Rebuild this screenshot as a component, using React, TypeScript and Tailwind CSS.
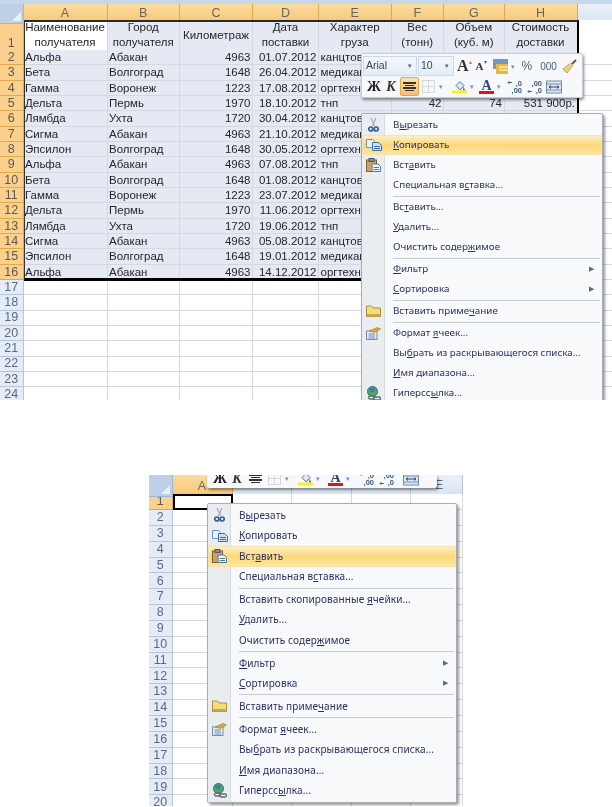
import type { ReactNode } from "react"

const topCols = "grid grid-cols-[23.5px_84px_72.5px_73px_66px_72.5px_52.5px_60.5px_73px_35px]"
const bottomCols = "grid grid-cols-[23.5px_60px_59.5px_60px_59px_52px]"

const names = ["Альфа", "Бета", "Гамма", "Дельта", "Лямбда", "Сигма", "Эпсилон", "Альфа", "Бета", "Гамма", "Дельта", "Лямбда", "Сигма", "Эпсилон", "Альфа"]
const cities = ["Абакан", "Волгоград", "Воронеж", "Пермь", "Ухта", "Абакан", "Волгоград", "Абакан", "Волгоград", "Воронеж", "Пермь", "Ухта", "Абакан", "Волгоград", "Абакан"]
const kms = ["4963", "1648", "1223", "1970", "1720", "4963", "1648", "4963", "1648", "1223", "1970", "1720", "4963", "1648", "4963"]
const dates = ["01.07.2012", "26.04.2012", "17.08.2012", "18.10.2012", "30.04.2012", "21.10.2012", "30.05.2012", "07.08.2012", "01.08.2012", "23.07.2012", "11.06.2012", "19.06.2012", "05.08.2012", "19.01.2012", "14.12.2012"]
const kinds = ["канцтовары", "медикаменты", "оргтехника", "тнп", "канцтовары", "медикаменты", "оргтехника", "тнп", "канцтовары", "медикаменты", "оргтехника", "тнп", "канцтовары", "медикаменты", "оргтехника"]

const headers = [
  ["Наименование", "получателя"],
  ["Город", "получателя"],
  ["Километраж"],
  ["Дата", "поставки"],
  ["Характер", "груза"],
  ["Вес", "(тонн)"],
  ["Объем", "(куб. м)"],
  ["Стоимость", "доставки"],
]

function ColHead({ label, on, extra }: { label: string; on?: boolean; extra?: string }) {
  return (
    <div
      className={`flex items-center justify-center border-r border-b text-[12.5px] ${
        on
          ? "border-[#e0a94f] bg-gradient-to-b from-[#fbdc9f] to-[#f6c676] text-[#6b6656]"
          : "border-[#b6c6d8] bg-gradient-to-b from-[#eaf0f7] to-[#d9e4f1] text-[#5b6b7d]"
      } ${extra ?? ""}`}
    >
      {label}
    </div>
  )
}

function RowHead({ n, on, tall }: { n: number; on?: boolean; tall?: boolean }) {
  return (
    <div
      className={`flex justify-center border-r border-b text-[12.5px] leading-none ${tall ? "items-end pb-[1px]" : "items-center"} ${
        on ? "border-[#e0a94f] bg-[#fbd08d] text-[#5d5a50]" : "border-[#b6c6d8] bg-[#e4ecf7] text-[#5b6b7d]"
      }`}
    >
      {n}
    </div>
  )
}

function Cell({ children, on, right }: { children?: ReactNode; on?: boolean; right?: boolean }) {
  return (
    <div
      className={`overflow-hidden whitespace-nowrap border-r border-b border-[#d5d8dc] px-[1.5px] text-[11.5px] leading-[15px] text-[#262626] ${
        on ? "bg-[#e5e9f3]" : "bg-white"
      } ${right ? "text-right" : ""}`}
    >
      {children}
    </div>
  )
}

function TopSheet() {
  const empty = [17, 18, 19, 20, 21, 22, 23, 24]
  return (
    <div className="relative h-[400px] overflow-hidden pt-[4px]">
      <div className="absolute inset-x-0 top-0 h-[4px] bg-[#c4d8ea]" />
      <div className={`${topCols} h-[16px]`}>
        <div className="relative border-r border-b border-[#9fb6d0] bg-[#bdd0e6]">
          <div className="absolute right-[2px] bottom-[2px] h-0 w-0 border-b-[9px] border-l-[9px] border-b-[#e9f0f8] border-l-transparent" />
        </div>
        {["A", "B", "C", "D", "E", "F", "G", "H"].map((c) => (
          <ColHead key={c} label={c} on />
        ))}
        <ColHead label="" />
      </div>

      <div className={`${topCols} h-[30px]`}>
        <RowHead n={1} on tall />
        {headers.map((lines, i) => (
          <div
            key={lines[0]}
            className={`flex flex-col items-center justify-center border-r border-b border-[#d5d8dc] text-[11.5px] leading-[15px] text-[#262626] ${
              i === 0 ? "bg-white" : "bg-[#e5e9f3]"
            }`}
          >
            {lines.map((l) => (
              <span key={l}>{l}</span>
            ))}
          </div>
        ))}
        <Cell />
      </div>

      {names.map((name, i) => (
        <div key={i} className={`${topCols} h-[15.33px]`}>
          <RowHead n={i + 2} on />
          <Cell on>{name}</Cell>
          <Cell on>{cities[i]}</Cell>
          <Cell on right>{kms[i]}</Cell>
          <Cell on right>{dates[i]}</Cell>
          <Cell on>{kinds[i]}</Cell>
          <Cell on right>{i === 3 ? "42" : ""}</Cell>
          <Cell on right>{i === 3 ? "74" : ""}</Cell>
          <Cell on right>{i === 3 ? "531 900р." : ""}</Cell>
          <Cell />
        </div>
      ))}

      {empty.map((n) => (
        <div key={n} className={`${topCols} h-[15.33px]`}>
          <RowHead n={n} />
          {Array.from({ length: 9 }).map((_, i) => (
            <Cell key={i} />
          ))}
        </div>
      ))}

      <div className="pointer-events-none absolute top-[20px] left-[23.5px] h-[261px] w-[555px] border-t-2 border-r-2 border-b-[3px] border-l border-t-[#2a2a2a] border-r-black border-b-black border-l-[#333]" />

      <div className="absolute top-[53px] left-[361px]">
        <MiniToolbar />
      </div>
      <div className="absolute top-[113px] left-[361px]">
        <ContextMenu
          width="w-[242px]"
          rowHeight="h-[20px]"
          textClass="text-[9.8px] tracking-[0px]"
          sepClass="my-[0.5px]"
          active="Копировать"
          insertLabel={["Вс", "т", "авить..."]}
        />
      </div>
    </div>
  )
}

function BottomSheet() {
  const rows = Array.from({ length: 19 }).map((_, i) => i + 2)
  return (
    <div className="relative mt-[75px] ml-[149px] h-[331px] w-[314px] overflow-hidden">
      <div className={`${bottomCols} h-[19px]`}>
        <div className="relative border-r border-b border-[#9fb6d0] bg-[#bdd0e6]">
          <div className="absolute right-[2px] bottom-[2px] h-0 w-0 border-b-[9px] border-l-[9px] border-b-[#e9f0f8] border-l-transparent" />
        </div>
        <ColHead label="A" on extra="pt-[2px]" />
        <ColHead label="" />
        <ColHead label="" />
        <ColHead label="" />
        <ColHead label="E" extra="justify-start pl-[24px]" />
      </div>
      <div className={`${bottomCols} h-[16px]`}>
        <RowHead n={1} on />
        <div className="relative z-10 border-2 border-black bg-white" />
        <Cell />
        <Cell />
        <Cell />
        <Cell />
      </div>
      {rows.map((n) => (
        <div key={n} className={`${bottomCols} h-[15.85px]`}>
          <RowHead n={n} />
          <Cell />
          <Cell />
          <Cell />
          <Cell />
          <Cell />
        </div>
      ))}

      <div className="absolute top-0 left-[58px] z-20 flex h-[13px] w-[230px] items-end overflow-hidden rounded-b-[2px] bg-[#f6f8fb] px-[2px] shadow-[1px_2px_3px_rgba(0,0,0,0.45)]">
        <ToolbarLower wide />
      </div>
      <div className="absolute top-[28px] left-[58px] z-20">
        <ContextMenu
          width="w-[250px]"
          rowHeight="h-[20.5px]"
          textClass="text-[10px] tracking-[0.1px]"
          sepClass="my-[0.6px]"
          active="Вставить"
          insertLabel={["Вставить скопированные ", "я", "чейки..."]}
        />
      </div>
    </div>
  )
}

function Combo({ w, label, left }: { w: string; label: string; left?: string }) {
  return (
    <div className={`flex h-[20px] items-center justify-between border border-[#c9d8ea] bg-gradient-to-b from-[#f2f7fc] to-[#e4edf7] pr-[4px] pl-[2px] text-[10.5px] text-[#39424f] ${w} ${left ?? ""}`}>
      <span>{label}</span>
      <span className="text-[7px] text-[#566]">▾</span>
    </div>
  )
}

function Caret({ className }: { className?: string }) {
  return <span className={`text-[7px] leading-none text-[#7a8fa6] ${className ?? ""}`}>▾</span>
}

function ArrowLeft() {
  return (
    <svg viewBox="0 0 5 5" className="h-[5px] w-[5px] shrink-0">
      <path d="M5 2.5H1M2.5 1 1 2.5 2.5 4" fill="none" stroke="#3f6fb0" />
    </svg>
  )
}

function ToolbarLower({ wide }: { wide?: boolean }) {
  return (
    <div className="flex h-[19px] w-full shrink-0 items-center">
      <span className="ml-[4px] w-[13px] text-center text-[14px] leading-none font-bold text-[#222]" style={{ fontFamily: '"Liberation Serif", serif' }}>Ж</span>
      <span className="ml-[5px] w-[12px] text-center text-[14px] leading-none font-bold text-[#333] italic" style={{ fontFamily: '"Liberation Serif", serif' }}>К</span>
      <div
        className={`ml-[3px] flex h-[19px] w-[19px] flex-col items-center justify-center gap-[1px] rounded-[2px] border ${
          wide ? "border-transparent" : "border-[#dfa552] bg-gradient-to-b from-[#fde3ac] to-[#f8bd6c]"
        }`}
      >
        <i className="block h-[1.5px] w-[13px] bg-[#333]" />
        <i className="block h-[1.5px] w-[9px] bg-[#333]" />
        <i className="block h-[1.5px] w-[13px] bg-[#333]" />
        <i className="block h-[1.5px] w-[9px] bg-[#333]" />
      </div>
      <svg viewBox="0 0 13 13" className="ml-[3px] h-[13px] w-[13px]">
        <path d="M.5.5h12v12H.5zM.5 6.5h12M6.5.5v12" fill="none" stroke="#b9b9b9" strokeDasharray="1 1" />
      </svg>
      <Caret className="ml-[4px]" />
      <svg viewBox="0 0 15 14" className="ml-[9px] h-[15px] w-[15px]">
        <path d="M4 6 8 2l4 4-4 4.5z" fill="#dfe8f2" stroke="#5f7a9a" />
        <path d="M11 7q2 2 2 3.5a1 1 0 0 1-2 0z" fill="#5f87b5" />
        <rect x="0" y="11" width="15" height="3" fill="#f7ee2b" />
      </svg>
      <Caret className="ml-[3px]" />
      <div className={`relative h-[15px] w-[15px] text-center ${wide ? "ml-[8px]" : "ml-[5px]"}`}>
        <span className="block text-[14px] leading-[13px] font-bold text-[#2d4a78]" style={{ fontFamily: '"Liberation Serif", serif' }}>A</span>
        <i className="absolute inset-x-0 bottom-0 h-[3px] bg-[#e5101c]" />
      </div>
      <Caret className="ml-[3px]" />
      <div className={`flex w-[16px] items-start justify-end text-[7.5px] leading-[7px] font-bold text-[#3c5878] ${wide ? "ml-[8px]" : "ml-[5px]"}`}>
        <ArrowLeft />
        <span className="text-right">
          ,0
          <br />
          ,00
        </span>
      </div>
      <div className="ml-[4px] flex w-[16px] items-end justify-end text-[7.5px] leading-[7px] font-bold text-[#3c5878]">
        <ArrowLeft />
        <span className="text-right">
          ,00
          <br />
          ,0
        </span>
      </div>
      <svg viewBox="0 0 16 13" className={`h-[14px] w-[16px] ${wide ? "ml-[9px]" : "ml-[4px]"}`}>
        <rect x=".5" y=".5" width="15" height="12" fill="#dfe8f2" stroke="#6f8cab" />
        <path d="M.5 3.5h15M.5 9.5h15" stroke="#6f8cab" />
        <path d="M3 6.5h10M5 5l-2 1.5L5 8m6-3 2 1.5L11 8" fill="none" stroke="#2d4a78" />
      </svg>
    </div>
  )
}

function MiniToolbar() {
  return (
    <div className="flex h-[45px] w-[222px] flex-col rounded-[2px] border border-[#c6ccd4] bg-[#f6f8fb] px-[1px] pt-[1px] shadow-[1px_2px_3px_rgba(0,0,0,0.45)]">
      <div className="flex h-[22px] items-center">
        <Combo w="w-[54px]" label="Arial" />
        <Combo w="w-[36px]" label="10" left="ml-[1px]" />
        <span className="ml-[3px] text-[16px] leading-none font-bold text-[#333]" style={{ fontFamily: '"Liberation Serif", serif' }}>A</span>
        <span className="-mt-[8px] text-[6px] text-[#c77f18]">▴</span>
        <span className="ml-[4px] text-[11px] leading-none font-bold text-[#333]" style={{ fontFamily: '"Liberation Serif", serif' }}>A</span>
        <span className="-mt-[8px] text-[6px] text-[#3a68a8]">▾</span>
        <svg viewBox="0 0 15 15" className="ml-[6px] h-[15px] w-[15px]">
          <rect width="15" height="10" fill="#6f97c8" />
          <rect x="3" y="5" width="12" height="10" fill="#e8b93e" />
          <path d="M6 8h9M6 11h9" stroke="#fff" />
        </svg>
        <Caret className="ml-[3px]" />
        <span className="ml-[7px] text-[12px] text-[#4c5d72]">%</span>
        <span className="ml-[8px] text-[10px] text-[#4c5d72]">000</span>
        <svg viewBox="0 0 15 15" className="ml-[5px] h-[15px] w-[15px]">
          <path d="M14 1 9 6" stroke="#6b5a3a" strokeWidth="2" />
          <path d="M9 4 1 10l4 4 6-8z" fill="#efd37c" stroke="#b9a05a" />
        </svg>
      </div>
      <ToolbarLower />
    </div>
  )
}

function IconScissors() {
  return (
    <svg viewBox="0 0 11 14" className="h-[14px] w-[11px]">
      <path d="M3 0l3.5 8M8 0 4.5 8" stroke="#9fb0c4" strokeWidth="1.3" fill="none" />
      <circle cx="2.8" cy="11" r="2" fill="none" stroke="#2f5d9a" strokeWidth="1.7" />
      <circle cx="8.2" cy="11" r="2" fill="none" stroke="#2f5d9a" strokeWidth="1.7" />
    </svg>
  )
}

function IconCopy() {
  return (
    <svg viewBox="0 0 16 12" className="h-[12px] w-[16px]">
      <path d="M.5.5h6l2 2v6h-8z" fill="#e6eef8" stroke="#6f93bd" />
      <path d="M6.5 3.5h6l3 3v5h-9z" fill="#cfe0f3" stroke="#3d6fa8" />
      <path d="M8 7.5h6M8 9.5h6" stroke="#3d6fa8" />
    </svg>
  )
}

function IconPaste() {
  return (
    <svg viewBox="0 0 15 14" className="h-[14px] w-[15px]">
      <rect x=".5" y="2" width="10" height="11.5" fill="#c9a468" stroke="#7d6030" />
      <rect x="3" y=".5" width="5" height="3" fill="#8a8f96" stroke="#555" />
      <path d="M6 6h6l2.5 2.5v5H6z" fill="#f1f5fa" stroke="#4f78a6" />
      <path d="M7.5 9.5h5.5M7.5 11.5h5.5" stroke="#4f78a6" />
    </svg>
  )
}

function IconFolder() {
  return (
    <svg viewBox="0 0 15 12" className="h-[12px] w-[15px]">
      <path d="M.5 1h5L7 3h7.5v8.5H.5z" fill="#f4dc79" stroke="#a98f3e" />
      <path d="M1 11.5h13.5V9H1z" fill="#c9a94c" />
    </svg>
  )
}

function IconFormat() {
  return (
    <svg viewBox="0 0 15 13" className="h-[13px] w-[15px]">
      <rect x=".5" y="4" width="10.5" height="8.5" fill="#e4edf7" stroke="#6f8fb2" />
      <path d="M2.5 7h6.5M2.5 9h6.5M2.5 11h6.5" stroke="#6f8fb2" />
      <path d="M3 4 11 .5l3.5 1.5-6 3.5z" fill="#d9a93a" stroke="#9c7a22" strokeWidth=".6" />
    </svg>
  )
}

function IconLink() {
  return (
    <svg viewBox="0 0 15 15" className="h-[15px] w-[15px]">
      <circle cx="6.5" cy="5.5" r="5" fill="#4faa55" stroke="#2d6f8f" />
      <path d="M3 3.5q3-3 6-1l-1 3-3 1z" fill="#3f78bf" />
      <rect x="2.5" y="10" width="6" height="3" rx="1.5" fill="none" stroke="#5d6c7c" strokeWidth="1.3" />
      <rect x="7.5" y="11" width="7" height="3" rx="1.5" fill="none" stroke="#5d6c7c" strokeWidth="1.3" />
    </svg>
  )
}

type MenuProps = {
  width: string
  rowHeight: string
  textClass: string
  sepClass: string
  active: string
  insertLabel: string[]
}

function ContextMenu({ width, rowHeight, textClass, sepClass, active, insertLabel }: MenuProps) {
  const item = (key: string, parts: string[], icon?: ReactNode, arrow?: boolean) => {
    const on = key === active
    return (
      <div
        key={key}
        className={`relative flex items-center ${rowHeight} ${
          on ? "bg-gradient-to-b from-[#fdf1cc] via-[#fbd878] to-[#fde7a0] shadow-[inset_0_0_0_1px_#f8e3ae]" : ""
        }`}
      >
        <div className="flex w-[23px] shrink-0 items-center justify-center">{icon}</div>
        <span className={`ml-[8px] whitespace-nowrap text-[#2b3068] ${textClass}`}>
          {parts[0]}
          <span className="underline">{parts[1]}</span>
          {parts[2]}
        </span>
        {arrow && <span className="absolute right-[8px] text-[7px] text-[#5d6a80]">▶</span>}
      </div>
    )
  }
  const sep = (k: string) => (
    <div key={k} className={`mr-[2px] ml-[31px] h-[1px] bg-[#c7ccd1] ${sepClass}`} />
  )
  return (
    <div
      className={`relative rounded-[2px] border border-[#a9adb2] bg-[#f8f9fa] py-[1px] shadow-[2px_2px_3px_rgba(0,0,0,0.4)] ${width}`}
      style={{ fontFamily: '"Noto Sans", sans-serif' }}
    >
      <div className="absolute inset-y-0 left-0 w-[23px] border-r border-[#d6dbde] bg-[#e9edef]" />
      {item("Вырезать", ["В", "ы", "резать"], <IconScissors />)}
      {item("Копировать", ["", "К", "опировать"], <IconCopy />)}
      {item("Вставить", ["Вст", "а", "вить"], <IconPaste />)}
      {item("Специальная", ["Специальная в", "с", "тавка..."])}
      {sep("s1")}
      {item("Вставить2", insertLabel)}
      {item("Удалить", ["", "У", "далить..."])}
      {item("Очистить", ["Очистить содер", "ж", "имое"])}
      {sep("s2")}
      {item("Фильтр", ["", "Ф", "ильтр"], undefined, true)}
      {item("Сортировка", ["", "С", "ортировка"], undefined, true)}
      {sep("s3")}
      {item("Примечание", ["Вставить приме", "ч", "ание"], <IconFolder />)}
      {sep("s4")}
      {item("Формат", ["Формат ", "я", "чеек..."], <IconFormat />)}
      {item("Выбрать", ["Вы", "б", "рать из раскрывающегося списка..."])}
      {item("Имя", ["", "И", "мя диапазона..."])}
      {item("Гиперссылка", ["Гиперсс", "ы", "лка..."], <IconLink />)}
    </div>
  )
}

export default function App() {
  return (
    <div
      className="h-[807px] w-[612px] overflow-hidden bg-white blur-[0.3px]"
      style={{ fontFamily: '"Liberation Sans", Arial, sans-serif' }}
    >
      <TopSheet />
      <BottomSheet />
    </div>
  )
}
